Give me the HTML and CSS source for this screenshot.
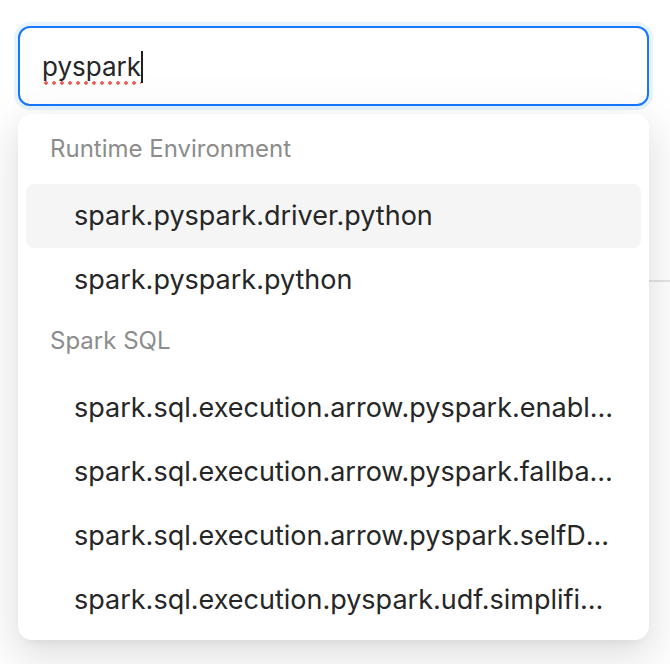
FILE: index.html
```html
<!DOCTYPE html>
<html>
<head>
<meta charset="utf-8">
<link rel="stylesheet" href="styles.css">
</head>
<body>
<div class="page">
  <div class="select">
    <div class="input">
      <span class="value">pyspark</span><span class="caret"></span>
    </div>
    <div class="dropdown">
      <div class="group-title">Runtime Environment</div>
      <div class="option active"><span class="label">spark.pyspark.driver.python</span></div>
      <div class="option"><span class="label">spark.pyspark.python</span></div>
      <div class="group-title">Spark SQL</div>
      <div class="option"><span class="label">spark.sql.execution.arrow.pyspark.enabled</span></div>
      <div class="option"><span class="label">spark.sql.execution.arrow.pyspark.fallback.enabled</span></div>
      <div class="option"><span class="label">spark.sql.execution.arrow.pyspark.selfDestruct.enabled</span></div>
      <div class="option"><span class="label">spark.sql.execution.pyspark.udf.simplifiedTraceback.enabled</span></div>
    </div>
  </div>
  <div class="content">
    <div class="divider"></div>
  </div>
</div>
</body>
</html>
```

FILE: styles.css
```css
* { box-sizing: border-box; }
html, body { margin: 0; padding: 0; background: #ffffff; }
body {
  font-family: Inter, "Noto Sans", "Liberation Sans", sans-serif;
  width: 670px;
  height: 664px;
  overflow: hidden;
}
.page {
  padding: 26px 21px 0 18px;
}
.select {
  position: relative;
  width: 631px;
}
.input {
  height: 80px;
  border: 2px solid #1677ff;
  border-radius: 12px;
  box-shadow: 0 0 0 4px rgba(5, 145, 255, 0.1);
  background: #ffffff;
  padding: 0 22px;
  display: flex;
  align-items: center;
  font-size: 26px;
  color: #262626;
}
.value {
  line-height: 38px;
  margin-top: 2px;
  background-image: radial-gradient(circle, #f25a52 1.5px, transparent 2px);
  background-size: 8px 4px;
  background-repeat: repeat-x;
  background-position: 0 33px;
}
.caret {
  display: inline-block;
  width: 2px;
  height: 32px;
  background: #1f1f1f;
  margin-top: 2px;
}
.dropdown {
  position: absolute;
  top: 88px;
  left: 0;
  width: 631px;
  background: #ffffff;
  border-radius: 14px;
  padding: 6px 8px 8px;
  box-shadow: 0 12px 32px 0 rgba(0, 0, 0, 0.08),
              0 6px 12px -8px rgba(0, 0, 0, 0.12),
              0 18px 56px 16px rgba(0, 0, 0, 0.05);
  z-index: 2;
}
.group-title {
  height: 64px;
  padding: 7px 24px 0;
  font-size: 24px;
  line-height: 44px;
  color: #8c8c8c;
}
.option {
  height: 64px;
  padding: 10px 24px 10px 48px;
  font-size: 27px;
  line-height: 44px;
  color: #262626;
  border-radius: 8px;
  display: flex;
  align-items: center;
}
.option.active {
  background: #f5f5f5;
}
.label {
  display: block;
  white-space: nowrap;
  overflow: hidden;
  text-overflow: ellipsis;
  min-width: 0;
  flex: 1;
}
.content {
  padding-top: 174px;
  margin: 0 -21px 0 560px;
}
.divider {
  height: 2px;
  background: #e6e6e6;
}
```
